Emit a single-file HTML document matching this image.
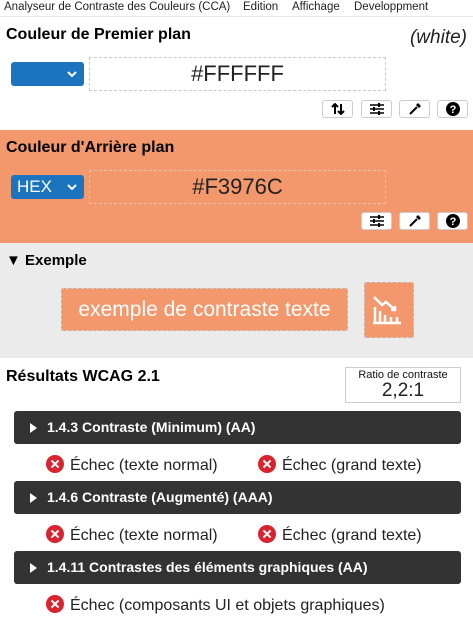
<!DOCTYPE html>
<html><head><meta charset="utf-8"><style>
*{box-sizing:border-box;margin:0;padding:0}
body{width:473px;height:625px;overflow:hidden;font-family:"Liberation Sans",Arial,sans-serif;background:#fff;color:#000;position:relative}
.a{position:absolute}
.menu{top:0;left:0;width:473px;height:17px;border-bottom:1px solid #e6e6e6;font-size:11.5px;color:#222;white-space:nowrap}
.menu span{position:absolute;top:1px}
h2{position:absolute;font-size:16px;font-weight:bold}
.sel{position:absolute;background:#1b74bd;border-radius:3px;color:#fff;font-size:18px;height:24px;width:73px}
.sel svg{position:absolute;right:7px;top:9px}
.inp{position:absolute;left:89px;width:297px;height:34px;border:1px dashed #c8c8c8;font-size:22px;text-align:center;line-height:32px;color:#222}
.btn{position:absolute;width:31px;height:18px;background:#fff;border:1px solid #ccc;border-radius:3px}
.btn svg{position:absolute;left:50%;top:50%;transform:translate(-50%,-50%)}
.bar{position:absolute;left:14px;width:447px;height:33px;background:#333;border-radius:3px;color:#fff;font-weight:bold;font-size:14px;line-height:33px;padding-left:33px}
.bar:before{content:"";position:absolute;left:16px;top:12px;border-left:7px solid #fff;border-top:5px solid transparent;border-bottom:5px solid transparent}
.res{position:absolute;font-size:16px;color:#222;white-space:nowrap}
.x{display:inline-block;width:18px;height:18px;border-radius:50%;background:#d9232f;vertical-align:-3px;margin-right:6px;position:relative}
.x:before,.x:after{content:"";position:absolute;left:8px;top:4px;width:2px;height:10px;background:#fff;transform:rotate(45deg)}
.x:after{transform:rotate(-45deg)}
</style></head><body>
<div class="a menu"><span style="left:4px">Analyseur de Contraste des Couleurs (CCA)</span><span style="left:243px">Edition</span><span style="left:292px">Affichage</span><span style="left:354px">Developpment</span></div>

<h2 style="left:6px;top:26px">Couleur de Premier plan</h2>
<div class="a" style="right:6px;top:27px;font-size:19px;font-style:italic;color:#222">(white)</div>
<div class="sel" style="left:11px;top:62px"><svg width="10" height="6"><path d="M1 1l4 4 4-4" stroke="#fff" stroke-width="2" fill="none"/></svg></div>
<div class="inp" style="top:57px">#FFFFFF</div>
<div class="btn" style="left:322px;top:100px"><svg width="14" height="12"><path d="M4 11V1M1 4l3-3 3 3M10 1v10M7 8l3 3 3-3" stroke="#000" stroke-width="2" fill="none"/></svg></div>
<div class="btn" style="left:361px;top:100px"><svg width="16" height="12"><path d="M1 2h14M1 6h14M1 10h14" stroke="#000" stroke-width="1.5"/><path d="M10 0v4M5 4v4M10 8v4" stroke="#000" stroke-width="2"/></svg></div>
<div class="btn" style="left:399px;top:100px"><svg width="14" height="14"><path d="M2 12l7-7" stroke="#000" stroke-width="2"/><path d="M8 3l3 3 2-2-3-3z" fill="#000"/></svg></div>
<div class="btn" style="left:437px;top:100px"><svg width="14" height="14"><circle cx="7" cy="7" r="7" fill="#000"/><text x="7" y="11" font-size="11" font-weight="bold" fill="#fff" text-anchor="middle" font-family="Liberation Sans">?</text></svg></div>

<div class="a" style="left:0;top:130px;width:473px;height:113px;background:#f3976c"></div>
<h2 style="left:6px;top:139px">Couleur d'Arrière plan</h2>
<div class="sel" style="left:11px;top:175px;font-size:17px;line-height:24px;padding-left:6px">HEX<svg width="10" height="6"><path d="M1 1l4 4 4-4" stroke="#fff" stroke-width="2" fill="none"/></svg></div>
<div class="inp" style="top:170px;border-color:#e0c3b4">#F3976C</div>
<div class="btn" style="left:361px;top:212px"><svg width="16" height="12"><path d="M1 2h14M1 6h14M1 10h14" stroke="#000" stroke-width="1.5"/><path d="M10 0v4M5 4v4M10 8v4" stroke="#000" stroke-width="2"/></svg></div>
<div class="btn" style="left:399px;top:212px"><svg width="14" height="14"><path d="M2 12l7-7" stroke="#000" stroke-width="2"/><path d="M8 3l3 3 2-2-3-3z" fill="#000"/></svg></div>
<div class="btn" style="left:437px;top:212px"><svg width="14" height="14"><circle cx="7" cy="7" r="7" fill="#000"/><text x="7" y="11" font-size="11" font-weight="bold" fill="#fff" text-anchor="middle" font-family="Liberation Sans">?</text></svg></div>

<div class="a" style="left:0;top:243px;width:473px;height:115px;background:#ebebeb"></div>
<h2 style="left:6px;top:252px;font-size:15px">▼ Exemple</h2>
<div class="a" style="left:61px;top:288px;width:287px;height:43px;background:#f3976c;border:1px dashed #ccc;color:#fff;font-size:21px;text-align:center;line-height:41px">exemple de contraste texte</div>
<div class="a" style="left:364px;top:282px;width:50px;height:56px;background:#f3976c;border:1px dashed #ccc">
<svg width="34" height="34" style="position:absolute;left:7px;top:10px" fill="none" stroke="#fff" stroke-width="2.5"><path d="M2 4l8 8 4-3 8 7"/><path d="M19 17h4v-4"/><path d="M3 14v15M8 18v11M13 22v7M19 24v5M25 24v5"/><path d="M1 30h28"/></svg></div>

<h2 style="left:6px;top:368px">Résultats WCAG 2.1</h2>
<div class="a" style="left:345px;top:367px;width:116px;height:36px;border:1px solid #ccc;text-align:center;font-size:11px;color:#111;padding-top:1px">Ratio de contraste<div style="font-size:19px;line-height:20px;color:#222">2,2:1</div></div>

<div class="bar" style="top:411px">1.4.3 Contraste (Minimum) (AA)</div>
<div class="res" style="left:46px;top:455px"><span class="x"></span>Échec (texte normal)</div>
<div class="res" style="left:258px;top:455px"><span class="x"></span>Échec (grand texte)</div>
<div class="bar" style="top:481px">1.4.6 Contraste (Augmenté) (AAA)</div>
<div class="res" style="left:46px;top:525px"><span class="x"></span>Échec (texte normal)</div>
<div class="res" style="left:258px;top:525px"><span class="x"></span>Échec (grand texte)</div>
<div class="bar" style="top:551px">1.4.11 Contrastes des éléments graphiques (AA)</div>
<div class="res" style="left:46px;top:595px"><span class="x"></span>Échec (composants UI et objets graphiques)</div>
</body></html>
